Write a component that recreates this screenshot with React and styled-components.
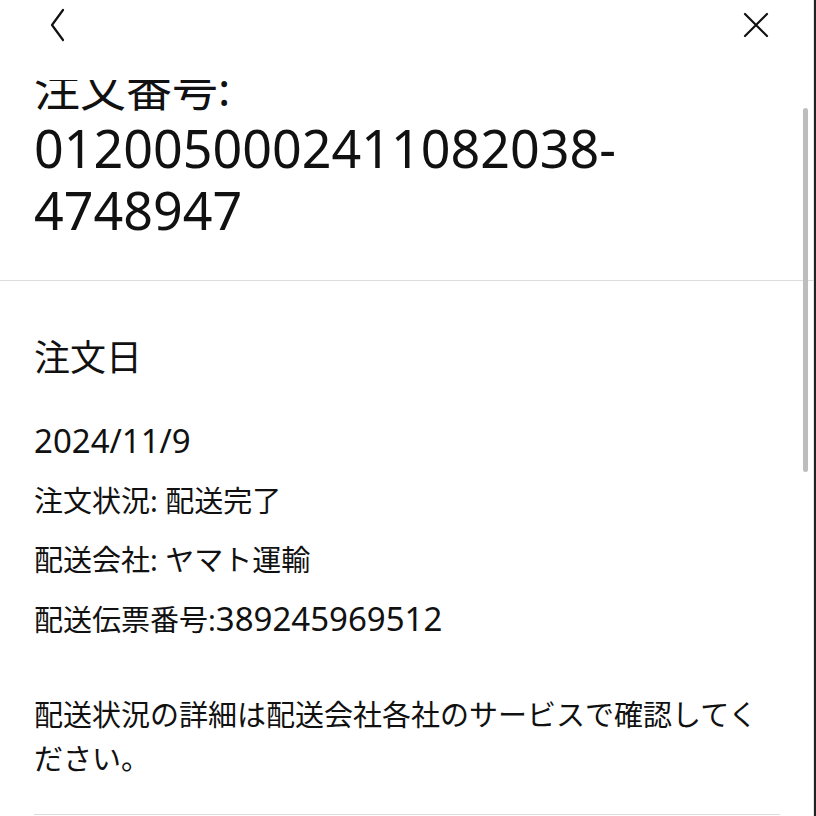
import React, { useLayoutEffect, useRef } from 'react';
import styled, { createGlobalStyle } from 'styled-components';

const GlobalStyle = createGlobalStyle`
    html, body {
        margin: 0;
        padding: 0;
        overflow: hidden;
        background: #fff;
    }
    body {
        font-family: "Noto Sans", "Noto Sans CJK JP", sans-serif;
        color: #111;
    }
`;

const Page = styled.div`
    position: relative;
    box-sizing: border-box;
    width: 816px;
    height: 100vh;
    display: flex;
    flex-direction: column;
    background: #fff;
    border-right: 2px solid #222;
    box-shadow: inset -1px 0 0 #e4e4e4;
`;

const Header = styled.header`
    flex: 0 0 80px;
    box-sizing: border-box;
    display: flex;
    align-items: center;
    justify-content: space-between;
    padding: 0 45px 30px 48px;
`;

const IconButton = styled.button`
    display: flex;
    padding: 0;
    border: 0;
    background: none;
    color: #111;
`;

const ScrollArea = styled.div`
    flex: 1;
    overflow: hidden;
`;

const Content = styled.div`
    padding-bottom: 40px;
`;

const NumberSection = styled.section`
    padding: 24px 34px 38px;
    border-bottom: 1px solid #dcdcdc;
`;

const OrderTitle = styled.h1`
    margin: 0;
    font-size: 46px;
    font-weight: 400;
    line-height: 60px;
`;

const Latin = styled.span`
    font-size: ${(p) => p.size}px;
`;

const DetailSection = styled.section`
    padding: 52px 34px 0;
`;

const DetailInner = styled.div`
    padding-bottom: 33px;
    border-bottom: 1px solid #dcdcdc;
`;

const SectionTitle = styled.h2`
    margin: 0;
    font-size: 36px;
    font-weight: 400;
    line-height: 1.4;
`;

const Rows = styled.div`
    display: flex;
    flex-direction: column;
    gap: 15px;
    margin-top: 36px;
`;

const Row = styled.p`
    margin: 0;
    font-size: 29px;
    line-height: 44px;
`;

const Note = styled.p`
    margin: 51px 0 0;
    font-size: 29px;
    line-height: 44px;
`;

const ScrollThumb = styled.div`
    position: absolute;
    top: 108px;
    right: 6px;
    width: 5px;
    height: 364px;
    border-radius: 3px;
    background: #bdbdbd;
`;

const BackIcon = () => (
    <svg width="20" height="34" viewBox="0 0 20 34" fill="none">
        <polyline points="15,2 4,17 15,32" stroke="currentColor" strokeWidth="2.2" strokeLinecap="round" strokeLinejoin="round" />
    </svg>
);

const CloseIcon = () => (
    <svg width="26" height="26" viewBox="0 0 26 26" fill="none">
        <path d="M2 2 L24 24 M24 2 L2 24" stroke="currentColor" strokeWidth="2.2" strokeLinecap="round" />
    </svg>
);

const order = {
    number: '0120050002411082038-4748947',
    date: '2024/11/9',
    status: '配送完了',
    carrier: 'ヤマト運輸',
    slip: '389245969512',
};

export default function App() {
    const scrollRef = useRef(null);

    // the sheet is shown scrolled a little past its top
    useLayoutEffect(() => {
        if (scrollRef.current) scrollRef.current.scrollTop = 46;
    }, []);

    return (
        <Page>
            <GlobalStyle />
            <Header>
                <IconButton aria-label="戻る"><BackIcon /></IconButton>
                <IconButton aria-label="閉じる"><CloseIcon /></IconButton>
            </Header>
            <ScrollArea ref={scrollRef}>
                <Content>
                    <NumberSection>
                        <OrderTitle>
                            注文番号: <Latin size={52}>{order.number}</Latin>
                        </OrderTitle>
                    </NumberSection>
                    <DetailSection>
                        <DetailInner>
                            <SectionTitle>注文日</SectionTitle>
                            <Rows>
                                <Row><Latin size={33}>{order.date}</Latin></Row>
                                <Row>注文状況: {order.status}</Row>
                                <Row>配送会社: {order.carrier}</Row>
                                <Row>配送伝票番号:<Latin size={33}>{order.slip}</Latin></Row>
                            </Rows>
                            <Note>配送状況の詳細は配送会社各社のサービスで確認してください。</Note>
                        </DetailInner>
                    </DetailSection>
                </Content>
            </ScrollArea>
            <ScrollThumb />
        </Page>
    );
}
